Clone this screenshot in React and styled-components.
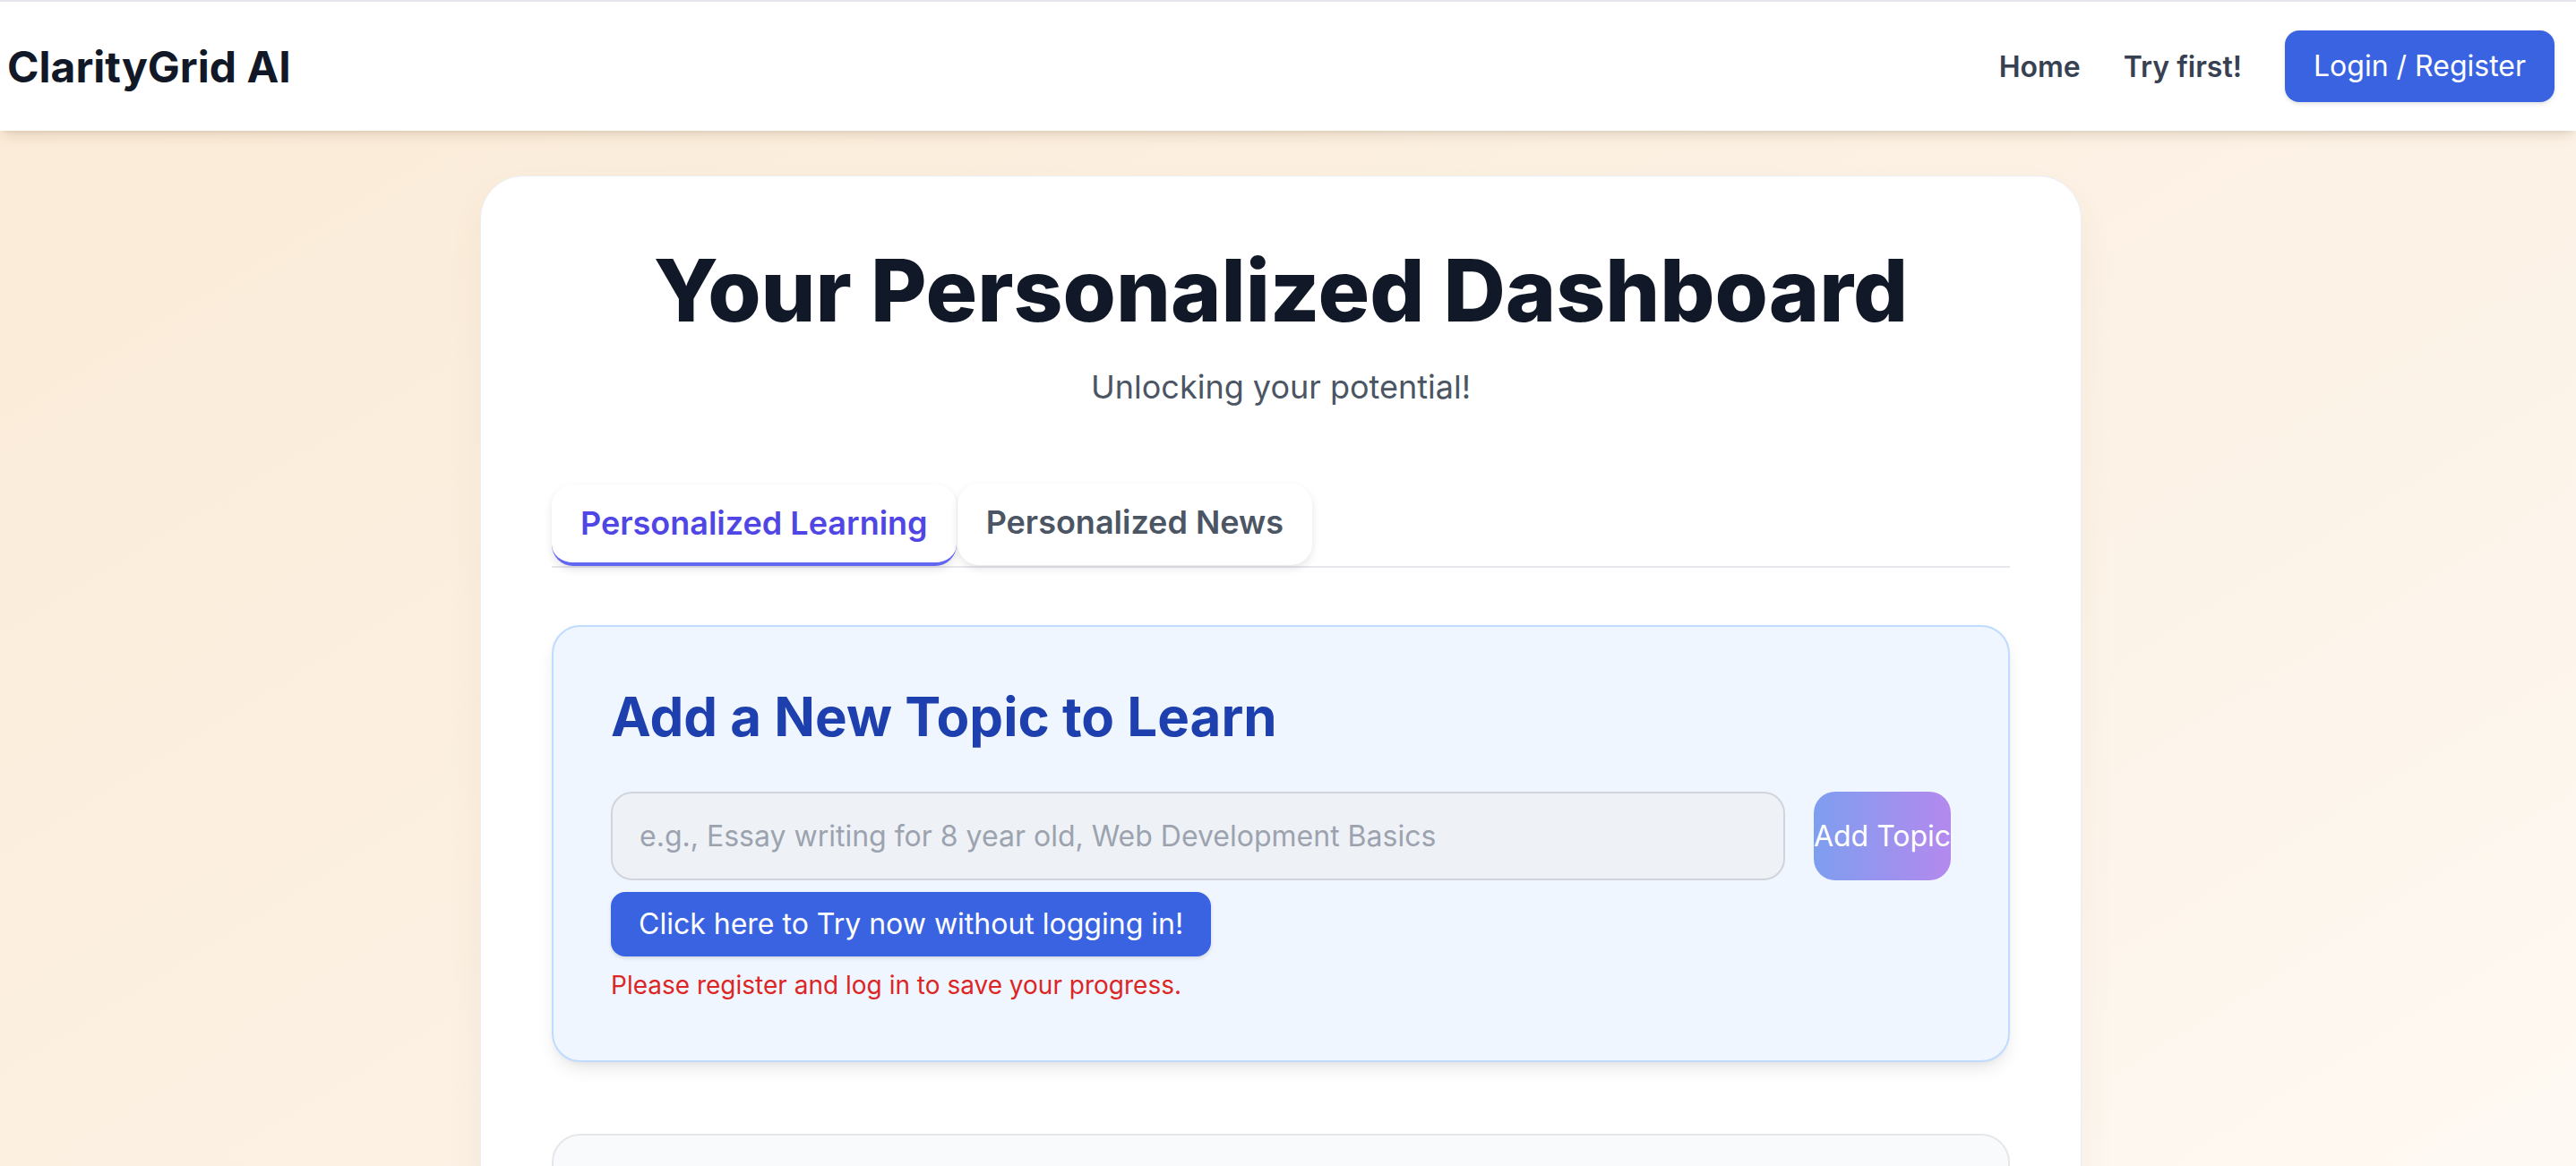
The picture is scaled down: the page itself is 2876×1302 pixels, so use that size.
import React from "react";
import styled, { createGlobalStyle } from "styled-components";

const Global = createGlobalStyle`
  html, body { margin: 0; padding: 0; }
  body {
    font-family: Inter, "Noto Sans", "Liberation Sans", sans-serif;
    background: #fcf1e3;
  }
  * { box-sizing: border-box; }
`;

const Page = styled.div`
  min-height: 100vh;
  background: linear-gradient(to bottom right, #fbebd7 0%, #fcf2e6 55%, #fffcf8 100%);
`;

const Header = styled.header`
  position: relative;
  z-index: 2;
  display: flex;
  align-items: center;
  justify-content: space-between;
  height: 146px;
  padding: 0 24px 0 8px;
  background: #fff;
  border-top: 2px solid #e6e3ea;
  box-shadow: 0 8px 14px -4px rgba(110, 80, 40, 0.18), 0 3px 6px -3px rgba(0, 0, 0, 0.08);
`;

const Logo = styled.div`
  font-size: 48px;
  font-weight: 700;
  color: #111827;
`;

const Nav = styled.nav`
  display: flex;
  align-items: center;
  gap: 48px;
`;

const NavLink = styled.a`
  font-size: 32px;
  font-weight: 600;
  color: #374151;
  text-decoration: none;
`;

const PrimaryButton = styled.button`
  border: none;
  font-family: inherit;
  font-size: 32px;
  line-height: 48px;
  font-weight: 400;
  color: #fff;
  background: #3a63e2;
  border-radius: 16px;
  padding: ${(p) => p.$pad || "16px 32px"};
  box-shadow: 0 2px 4px rgba(0, 0, 0, 0.12);
  cursor: pointer;
  white-space: nowrap;
`;

const Main = styled.main`
  display: flex;
  justify-content: center;
  padding: 50px 16px 0 0;
`;

const Card = styled.section`
  width: 1788px;
  background: #fff;
  border: 1px solid #eceef5;
  border-radius: 48px;
  padding: 79px 79px 80px;
  box-shadow: 0 20px 40px rgba(120, 90, 50, 0.06);
`;

const Title = styled.h1`
  margin: 0;
  font-size: 96px;
  line-height: 96px;
  font-weight: 800;
  color: #111827;
  text-align: center;
`;

const Subtitle = styled.p`
  margin: 32px 0 0;
  font-size: 36px;
  line-height: 56px;
  color: #4b5563;
  text-align: center;
`;

const Tabs = styled.div`
  display: flex;
  align-items: flex-end;
  gap: 1px;
  margin-top: 80px;
  border-bottom: 2px solid #e5e7eb;
`;

const Tab = styled.button`
  border: none;
  border-bottom: 4px solid ${(p) => (p.$active ? "#6366f1" : "transparent")};
  background: #fff;
  font-family: inherit;
  font-size: 36px;
  line-height: 56px;
  font-weight: 600;
  color: ${(p) => (p.$active ? "#4f46e5" : "#4b5563")};
  padding: 15px 32px 16px;
  border-radius: 24px;
  box-shadow: 0 4px 10px rgba(0, 0, 0, 0.1);
  cursor: pointer;
  margin-bottom: ${(p) => (p.$active ? "0" : "1px")};
`;

const Panel = styled.div`
  margin-top: ${(p) => p.$mt || 0}px;
  background: ${(p) => (p.$muted ? "#f9fafb" : "#eff6ff")};
  border: 2px solid ${(p) => (p.$muted ? "#e5e7eb" : "#bfdbfe")};
  border-radius: 32px;
  padding: 64px;
  min-height: ${(p) => p.$minH || 0}px;
  box-shadow: ${(p) =>
    p.$muted ? "none" : "0 10px 20px -4px rgba(0,0,0,0.10), 0 4px 8px -4px rgba(0,0,0,0.06)"};
`;

const PanelTitle = styled.h2`
  margin: 0 0 48px;
  font-size: 60px;
  line-height: 72px;
  font-weight: 700;
  color: #1e40af;
`;

const Row = styled.div`
  display: flex;
  gap: 32px;
`;

const TopicInput = styled.input`
  flex: 1;
  height: 99px;
  padding: 24px 30px;
  border: 2px solid #d1d5db;
  border-radius: 24px;
  background: #eef2f7;
  font-family: inherit;
  font-size: 32px;
  color: #111827;
  outline: none;
  &::placeholder { color: #9ca3af; }
`;

const AddButton = styled.button`
  flex: none;
  width: 153px;
  height: 99px;
  padding: 0;
  border: none;
  border-radius: 24px;
  background: linear-gradient(to right, #7e9eef, #b489ee);
  color: #fff;
  font-family: inherit;
  font-size: 32px;
  white-space: nowrap;
  display: flex;
  align-items: center;
  justify-content: center;
  overflow: visible;
`;

const TryRow = styled.div`
  margin-top: 13px;
`;

const Notice = styled.p`
  margin: 12px 0 0;
  font-size: 28px;
  line-height: 40px;
  color: #dc2626;
`;

export default function App() {
  return (
    <>
      <Global />
      <Page>
        <Header>
          <Logo>ClarityGrid AI</Logo>
          <Nav>
            <NavLink href="#">Home</NavLink>
            <NavLink href="#">Try first!</NavLink>
            <PrimaryButton>Login / Register</PrimaryButton>
          </Nav>
        </Header>
        <Main>
          <Card>
            <Title>Your Personalized Dashboard</Title>
            <Subtitle>Unlocking your potential!</Subtitle>
            <Tabs>
              <Tab $active>Personalized Learning</Tab>
              <Tab>Personalized News</Tab>
            </Tabs>
            <Panel $mt={64}>
              <PanelTitle>Add a New Topic to Learn</PanelTitle>
              <Row>
                <TopicInput placeholder="e.g., Essay writing for 8 year old, Web Development Basics" />
                <AddButton>Add Topic</AddButton>
              </Row>
              <TryRow>
                <PrimaryButton $pad="12px 31px">Click here to Try now without logging in!</PrimaryButton>
              </TryRow>
              <Notice>Please register and log in to save your progress.</Notice>
            </Panel>
            <Panel $mt={80} $muted $minH={420} />
          </Card>
        </Main>
      </Page>
    </>
  );
}
